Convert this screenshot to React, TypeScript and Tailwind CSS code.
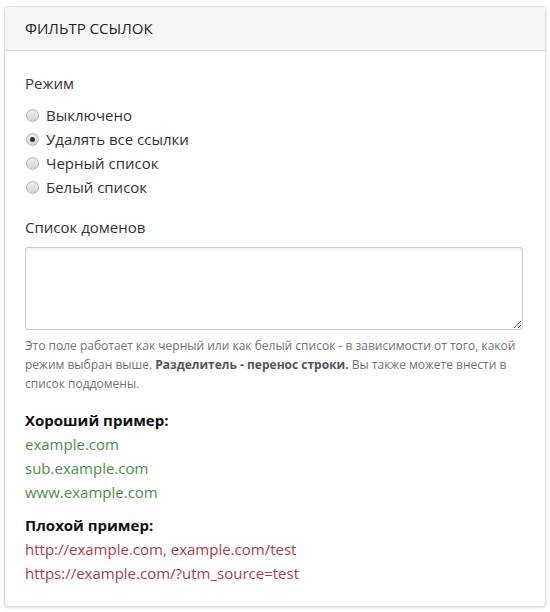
import React from 'react';

const modes = ['Выключено', 'Удалять все ссылки', 'Черный список', 'Белый список'];
const good = ['example.com', 'sub.example.com', 'www.example.com'];
const bad = ['http://example.com, example.com/test', 'https://example.com/?utm_source=test'];

const Radio: React.FC<{ label: string; checked?: boolean }> = ({ label, checked }) => (
  <label className="flex items-center h-6">
    <span className="w-[13px] h-[13px] rounded-full border border-[#b5b5b5] bg-gradient-to-b from-[#eeeeee] to-[#d6d6d6] flex items-center justify-center ml-[1px] mr-[7px]">
      {checked && <span className="w-[5px] h-[5px] rounded-full bg-[#333]" />}
    </span>
    <span>{label}</span>
  </label>
);

const App: React.FC = () => {
  return (
    <div className="w-[550px] h-[612px] bg-white pt-[6px] px-[4px] font-['Open_Sans',sans-serif] text-[#333] text-[15px]">
      <div className="border border-[#dddddd] rounded-[4px] shadow-sm">
        <div className="bg-[#f5f5f5] border-b border-[#dddddd] h-[44px] flex items-center px-[20px] text-[15px] text-[#222] rounded-t-[4px]">
          ФИЛЬТР ССЫЛОК
        </div>
        <div className="px-[20px] pt-[20px] pb-[21px]">
          <div className="h-[24px] flex items-center mb-[8px]">Режим</div>
          <div>
            {modes.map((m, i) => (
              <Radio key={m} label={m} checked={i === 1} />
            ))}
          </div>
          <div className="h-[24px] flex items-center mt-[16px] mb-[8px]">Список доменов</div>
          <textarea className="block w-[498px] h-[83px] border border-[#cccccc] rounded-[3px] shadow-inner resize-y" />
          <p className="text-[12px] leading-[19px] text-[#737373] mt-[6px] w-[500px]">
            Это поле работает как черный или как белый список - в зависимости от того, какой режим выбран выше.{' '}
            <b className="text-[#555]">Разделитель - перенос строки.</b> Вы также можете внести в список поддомены.
          </p>
          <div className="mt-[15px] font-bold text-[#111] h-[24px] flex items-center">Хороший пример:</div>
          {good.map((g) => (
            <div key={g} className="h-[24px] flex items-center text-[#4b8f45]">{g}</div>
          ))}
          <div className="mt-[9px] font-bold text-[#111] h-[24px] flex items-center">Плохой пример:</div>
          {bad.map((b) => (
            <div key={b} className="h-[24px] flex items-center text-[#b03a4a]">{b}</div>
          ))}
        </div>
      </div>
    </div>
  );
};

export default App;
